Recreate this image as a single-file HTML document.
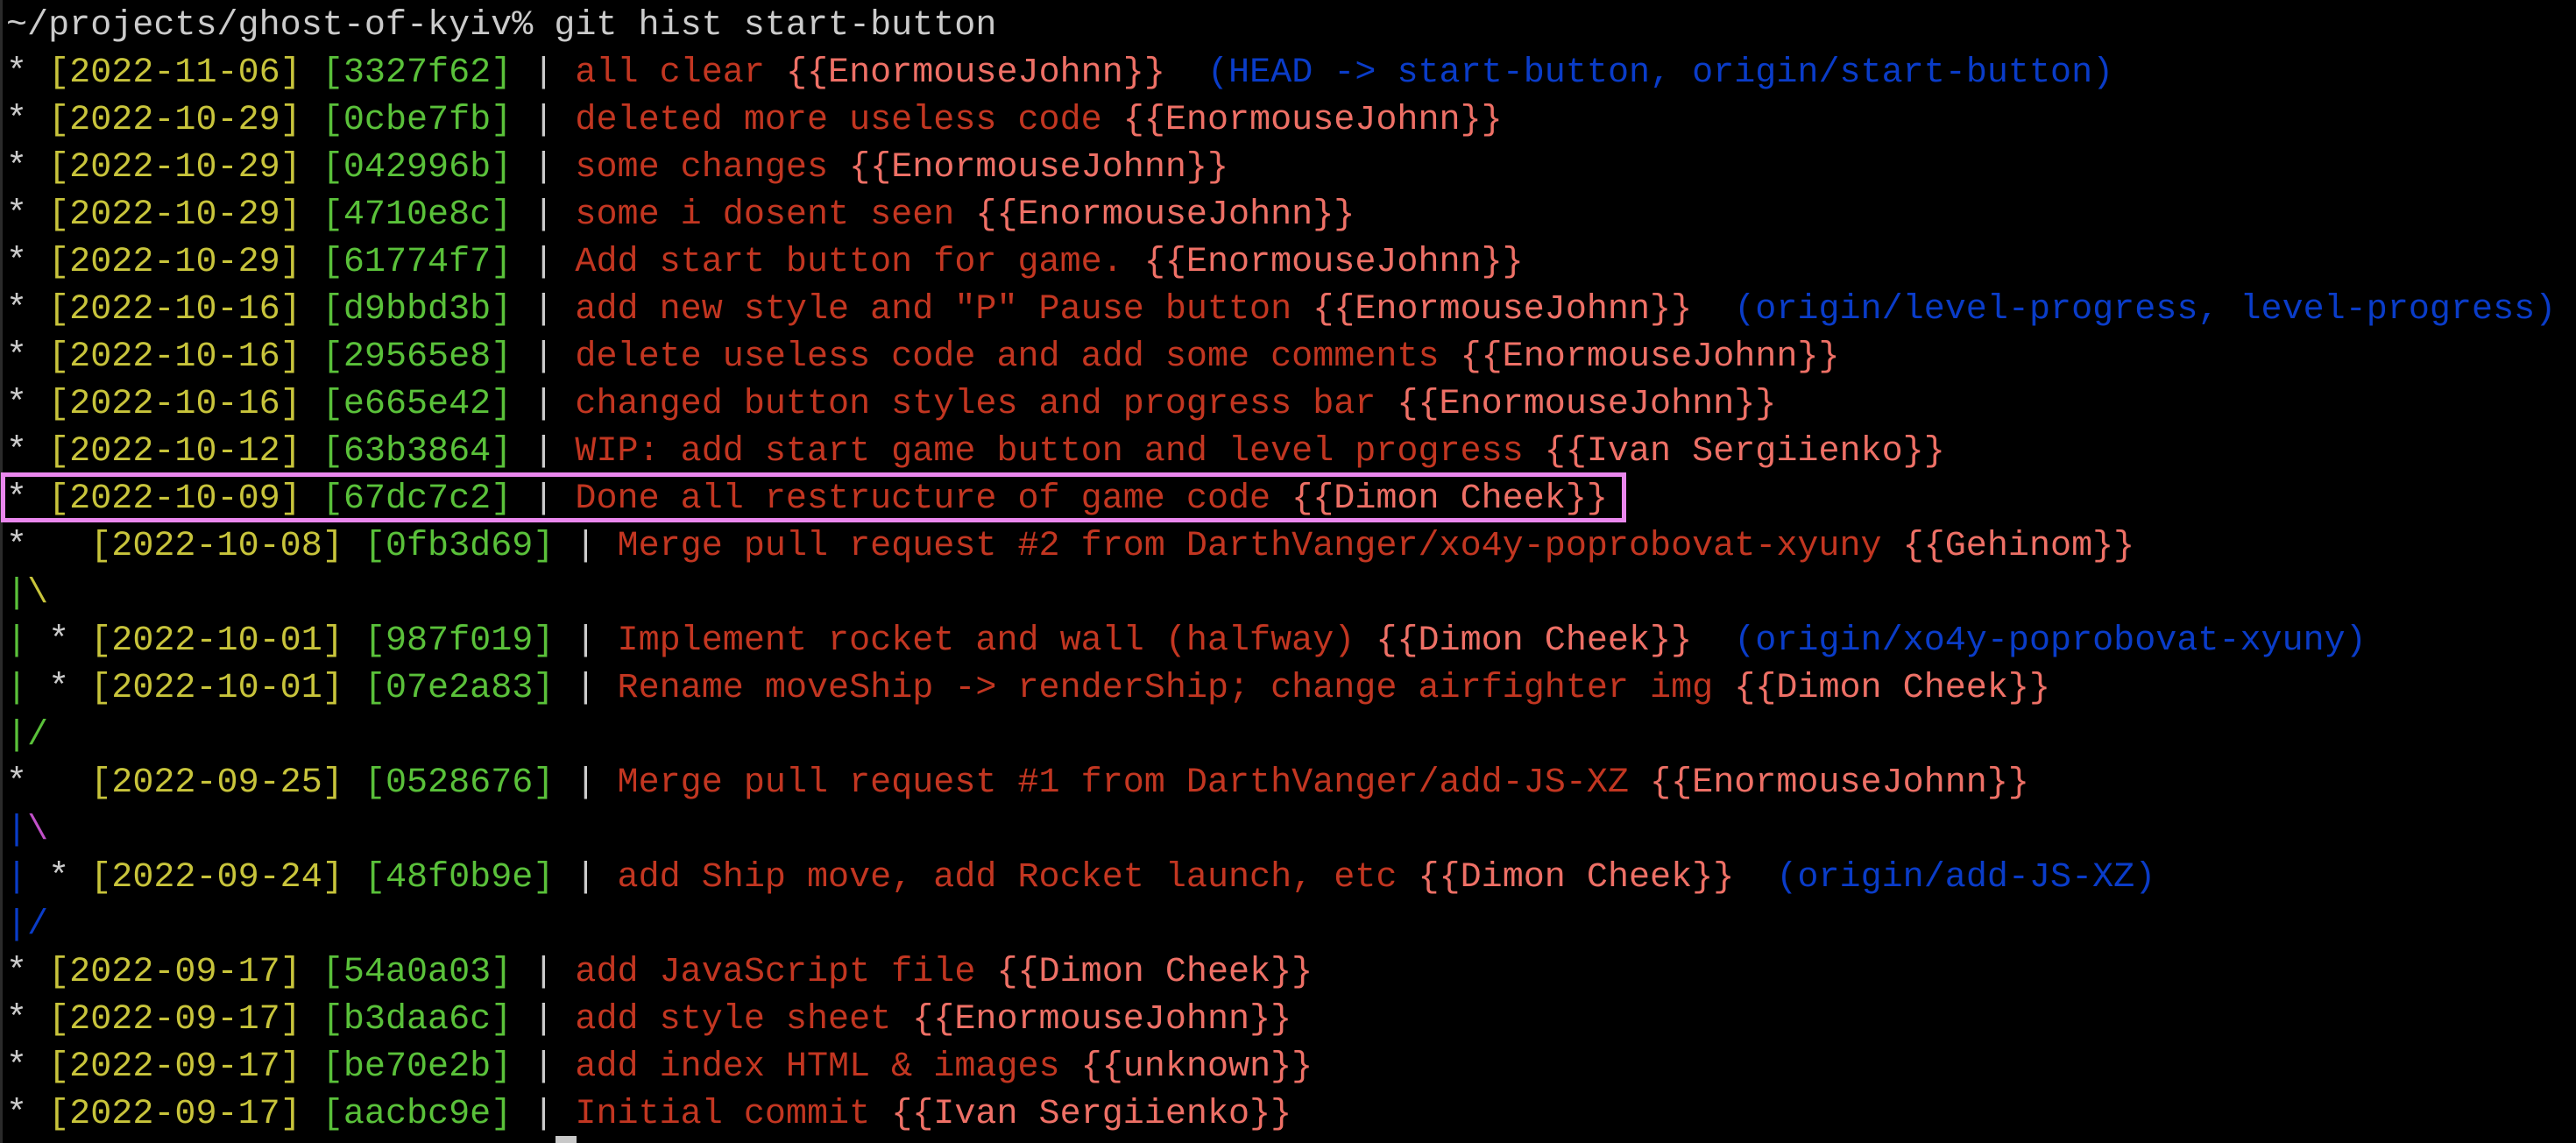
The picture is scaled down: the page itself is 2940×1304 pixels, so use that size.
<!DOCTYPE html>
<html><head><meta charset="utf-8"><style>
html,body{margin:0;padding:0;background:#000;width:2940px;height:1304px;overflow:hidden}
body{position:relative}
pre{position:absolute;left:7px;top:3px;margin:0;font-family:"Liberation Mono",monospace;font-size:40.1px;line-height:54px;color:#cbcbcb;white-space:pre}
.y{color:#c8c43b}.g{color:#5ac13a}.r{color:#c23621}.s{color:#ee7066}.b{color:#0a3cc8}.m{color:#c050c8}
.edge{position:absolute;left:0;top:0;width:3px;height:1304px;background:#2a2a2a}
.box{position:absolute;left:1px;top:539px;width:1845px;height:47px;border:5px solid #ea88ee}
.cur{position:absolute;left:634px;top:1296px;width:24px;height:8px;background:#c8c8c8}
</style></head><body>
<div class="edge"></div>
<div class="box"></div>
<pre>~/projects/ghost-of-kyiv% git hist start-button
* <span class="y">[2022-11-06]</span> <span class="g">[3327f62]</span> | <span class="r">all clear</span> <span class="s">{{EnormouseJohnn}}</span>  <span class="b">(HEAD -&gt; start-button, origin/start-button)</span>
* <span class="y">[2022-10-29]</span> <span class="g">[0cbe7fb]</span> | <span class="r">deleted more useless code</span> <span class="s">{{EnormouseJohnn}}</span>
* <span class="y">[2022-10-29]</span> <span class="g">[042996b]</span> | <span class="r">some changes</span> <span class="s">{{EnormouseJohnn}}</span>
* <span class="y">[2022-10-29]</span> <span class="g">[4710e8c]</span> | <span class="r">some i dosent seen</span> <span class="s">{{EnormouseJohnn}}</span>
* <span class="y">[2022-10-29]</span> <span class="g">[61774f7]</span> | <span class="r">Add start button for game.</span> <span class="s">{{EnormouseJohnn}}</span>
* <span class="y">[2022-10-16]</span> <span class="g">[d9bbd3b]</span> | <span class="r">add new style and "P" Pause button</span> <span class="s">{{EnormouseJohnn}}</span>  <span class="b">(origin/level-progress, level-progress)</span>
* <span class="y">[2022-10-16]</span> <span class="g">[29565e8]</span> | <span class="r">delete useless code and add some comments</span> <span class="s">{{EnormouseJohnn}}</span>
* <span class="y">[2022-10-16]</span> <span class="g">[e665e42]</span> | <span class="r">changed button styles and progress bar</span> <span class="s">{{EnormouseJohnn}}</span>
* <span class="y">[2022-10-12]</span> <span class="g">[63b3864]</span> | <span class="r">WIP: add start game button and level progress</span> <span class="s">{{Ivan Sergiienko}}</span>
* <span class="y">[2022-10-09]</span> <span class="g">[67dc7c2]</span> | <span class="r">Done all restructure of game code</span> <span class="s">{{Dimon Cheek}}</span>
*   <span class="y">[2022-10-08]</span> <span class="g">[0fb3d69]</span> | <span class="r">Merge pull request #2 from DarthVanger/xo4y-poprobovat-xyuny</span> <span class="s">{{Gehinom}}</span>
<span class="g">|</span><span class="y">\</span>
<span class="g">|</span> * <span class="y">[2022-10-01]</span> <span class="g">[987f019]</span> | <span class="r">Implement rocket and wall (halfway)</span> <span class="s">{{Dimon Cheek}}</span>  <span class="b">(origin/xo4y-poprobovat-xyuny)</span>
<span class="g">|</span> * <span class="y">[2022-10-01]</span> <span class="g">[07e2a83]</span> | <span class="r">Rename moveShip -&gt; renderShip; change airfighter img</span> <span class="s">{{Dimon Cheek}}</span>
<span class="g">|/</span>
*   <span class="y">[2022-09-25]</span> <span class="g">[0528676]</span> | <span class="r">Merge pull request #1 from DarthVanger/add-JS-XZ</span> <span class="s">{{EnormouseJohnn}}</span>
<span class="b">|</span><span class="m">\</span>
<span class="b">|</span> * <span class="y">[2022-09-24]</span> <span class="g">[48f0b9e]</span> | <span class="r">add Ship move, add Rocket launch, etc</span> <span class="s">{{Dimon Cheek}}</span>  <span class="b">(origin/add-JS-XZ)</span>
<span class="b">|/</span>
* <span class="y">[2022-09-17]</span> <span class="g">[54a0a03]</span> | <span class="r">add JavaScript file</span> <span class="s">{{Dimon Cheek}}</span>
* <span class="y">[2022-09-17]</span> <span class="g">[b3daa6c]</span> | <span class="r">add style sheet</span> <span class="s">{{EnormouseJohnn}}</span>
* <span class="y">[2022-09-17]</span> <span class="g">[be70e2b]</span> | <span class="r">add index HTML &amp; images</span> <span class="s">{{unknown}}</span>
* <span class="y">[2022-09-17]</span> <span class="g">[aacbc9e]</span> | <span class="r">Initial commit</span> <span class="s">{{Ivan Sergiienko}}</span></pre>
<div class="cur"></div>
</body></html>
